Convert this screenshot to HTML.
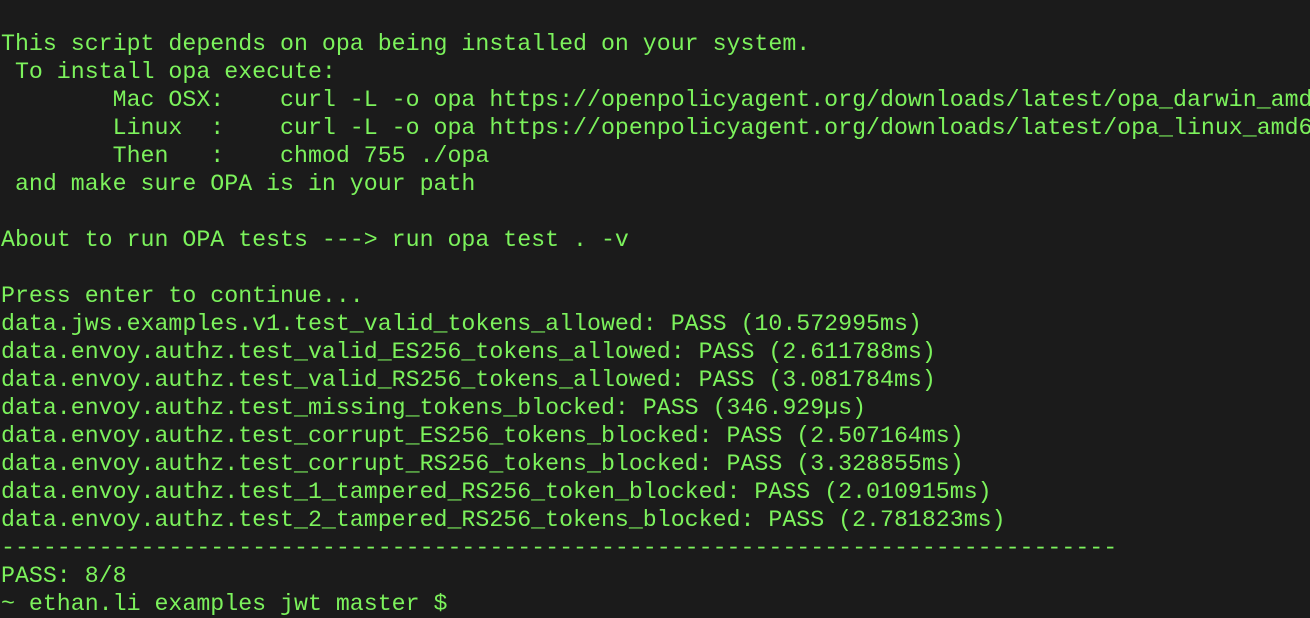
<!DOCTYPE html>
<html><head><style>
html,body{margin:0;padding:0;background:#1b1b1b;width:1310px;height:596px;overflow:hidden}
pre{margin:0;position:absolute;left:1px;top:30px;font-family:"Liberation Mono",monospace;font-size:23.25px;line-height:28px;color:#7cf25c;white-space:pre}
</style></head><body>
<pre>This script depends on opa being installed on your system.
 To install opa execute:
        Mac OSX:    curl -L -o opa https://openpolicyagent.org/downloads/latest/opa_darwin_amd64
        Linux  :    curl -L -o opa https://openpolicyagent.org/downloads/latest/opa_linux_amd64
        Then   :    chmod 755 ./opa
 and make sure OPA is in your path

About to run OPA tests ---&gt; run opa test . -v

Press enter to continue...
data.jws.examples.v1.test_valid_tokens_allowed: PASS (10.572995ms)
data.envoy.authz.test_valid_ES256_tokens_allowed: PASS (2.611788ms)
data.envoy.authz.test_valid_RS256_tokens_allowed: PASS (3.081784ms)
data.envoy.authz.test_missing_tokens_blocked: PASS (346.929µs)
data.envoy.authz.test_corrupt_ES256_tokens_blocked: PASS (2.507164ms)
data.envoy.authz.test_corrupt_RS256_tokens_blocked: PASS (3.328855ms)
data.envoy.authz.test_1_tampered_RS256_token_blocked: PASS (2.010915ms)
data.envoy.authz.test_2_tampered_RS256_tokens_blocked: PASS (2.781823ms)
--------------------------------------------------------------------------------
PASS: 8/8
~ ethan.li examples jwt master $</pre>
</body></html>
